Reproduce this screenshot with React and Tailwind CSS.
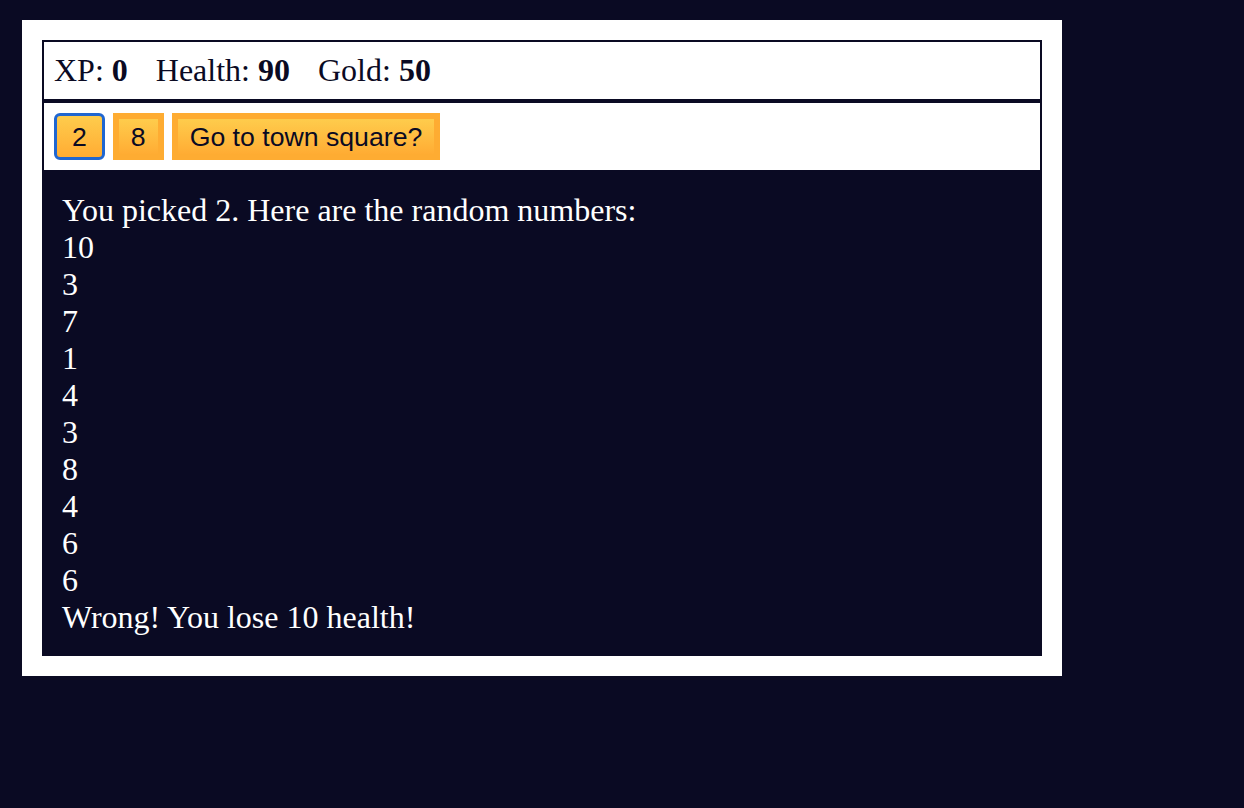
export default function App() {
  const numbers = [10, 3, 7, 1, 4, 3, 8, 4, 6, 6];

  return (
    <div className="min-h-screen bg-[#0a0a23] pt-[20px] pl-[22px] font-['Liberation_Serif',serif]">
      <div className="w-[1040px] bg-white p-[20px] text-white">
        <div className="border-2 border-[#0a0a23] p-[10px] text-[32px] leading-[1.15] text-[#0a0a23]">
          <span className="pr-[20px]">
            XP: <strong>0</strong>
          </span>{" "}
          <span className="pr-[20px]">
            Health: <strong>90</strong>
          </span>{" "}
          <span className="pr-[20px]">
            Gold: <strong>50</strong>
          </span>
        </div>

        <div className="flex gap-2 border-2 border-[#0a0a23] p-[10px] font-['Liberation_Sans',Arial,sans-serif] text-[26.67px] leading-[1.15] text-[#0a0a23]">
          <button className="rounded-[6px] border-[3px] border-[#1f66d1] bg-gradient-to-b from-[#fecc4c] to-[#ffac33] px-[15px] pt-[6px] pb-[5px]">
            2
          </button>
          <button className="border-[6px] border-[#feac32] bg-gradient-to-b from-[#fecc4c] to-[#ffac33] px-[12px] pt-[3px] pb-[2px]">
            8
          </button>
          <button className="border-[6px] border-[#feac32] bg-gradient-to-b from-[#fecc4c] to-[#ffac33] px-[12px] pt-[3px] pb-[2px]">
            Go to town square?
          </button>
        </div>

        <div className="bg-[#0a0a23] p-[20px] text-[32px] leading-[37px] text-white">
          You picked 2. Here are the random numbers:
          {numbers.map((n, i) => (
            <div key={i}>{n}</div>
          ))}
          Wrong! You lose 10 health!
        </div>
      </div>
    </div>
  );
}
